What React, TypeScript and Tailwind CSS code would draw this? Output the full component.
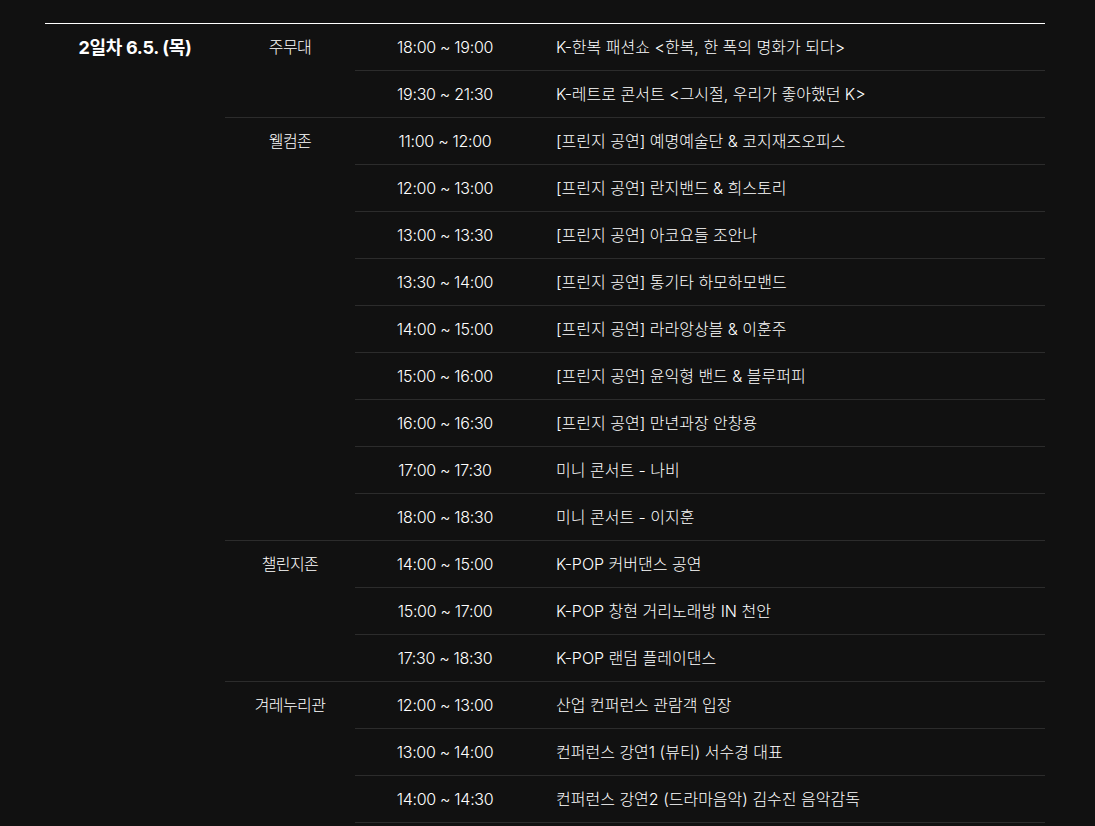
import React from 'react';

interface Row {
  time: string;
  title: string;
}

interface Group {
  venue: string;
  rows: Row[];
}

const groups: Group[] = [
  {
    venue: '주무대',
    rows: [
      { time: '18:00 ~ 19:00', title: 'K-한복 패션쇼 <한복, 한 폭의 명화가 되다>' },
      { time: '19:30 ~ 21:30', title: 'K-레트로 콘서트 <그시절, 우리가 좋아했던 K>' },
    ],
  },
  {
    venue: '웰컴존',
    rows: [
      { time: '11:00 ~ 12:00', title: '[프린지 공연] 예명예술단 & 코지재즈오피스' },
      { time: '12:00 ~ 13:00', title: '[프린지 공연] 란지밴드 & 희스토리' },
      { time: '13:00 ~ 13:30', title: '[프린지 공연] 아코요들 조안나' },
      { time: '13:30 ~ 14:00', title: '[프린지 공연] 통기타 하모하모밴드' },
      { time: '14:00 ~ 15:00', title: '[프린지 공연] 라라앙상블 & 이훈주' },
      { time: '15:00 ~ 16:00', title: '[프린지 공연] 윤익형 밴드 & 블루퍼피' },
      { time: '16:00 ~ 16:30', title: '[프린지 공연] 만년과장 안창용' },
      { time: '17:00 ~ 17:30', title: '미니 콘서트 - 나비' },
      { time: '18:00 ~ 18:30', title: '미니 콘서트 - 이지훈' },
    ],
  },
  {
    venue: '챌린지존',
    rows: [
      { time: '14:00 ~ 15:00', title: 'K-POP 커버댄스 공연' },
      { time: '15:00 ~ 17:00', title: 'K-POP 창현 거리노래방 IN 천안' },
      { time: '17:30 ~ 18:30', title: 'K-POP 랜덤 플레이댄스' },
    ],
  },
  {
    venue: '겨레누리관',
    rows: [
      { time: '12:00 ~ 13:00', title: '산업 컨퍼런스 관람객 입장' },
      { time: '13:00 ~ 14:00', title: '컨퍼런스 강연1 (뷰티) 서수경 대표' },
      { time: '14:00 ~ 14:30', title: '컨퍼런스 강연2 (드라마음악) 김수진 음악감독' },
    ],
  },
];

export default function App() {
  return (
    <div
      className="min-h-screen bg-[#111111] pt-[23px] pb-10 text-white"
      style={{ fontFamily: 'Inter, "Noto Sans CJK KR", sans-serif' }}
    >
      <div className="ml-[45px] w-[1000px] border-t border-white">
        <div className="flex">
          {/* day column */}
          <div className="w-[180px] shrink-0">
            <div className="flex h-[46px] items-center justify-center text-[18px] font-bold tracking-[-0.3px]">
              2일차 6.5. (목)
            </div>
          </div>

          <div className="flex-1">
            {groups.map((group, gi) => (
              <div
                key={group.venue}
                className={`flex ${gi > 0 ? 'border-t border-[#2c2c2c]' : ''}`}
              >
                <div className="flex h-[46px] w-[130px] shrink-0 items-center justify-center text-[16px] font-light tracking-[-0.6px]">
                  {group.venue}
                </div>
                <div
                  className={`flex-1 ${
                    gi === groups.length - 1 ? 'border-b border-[#2c2c2c]' : ''
                  }`}
                >
                  {group.rows.map((row, ri) => (
                    <div
                      key={row.time + ri}
                      className={`flex items-center text-[16px] font-light ${
                        ri > 0 ? 'h-[47px] border-t border-[#2c2c2c]' : 'h-[46px]'
                      }`}
                    >
                      <div className="w-[180px] shrink-0 text-center tracking-[-0.3px]">
                        {row.time}
                      </div>
                      <div className="pl-[21px]">{row.title}</div>
                    </div>
                  ))}
                </div>
              </div>
            ))}
          </div>
        </div>
      </div>
    </div>
  );
}
